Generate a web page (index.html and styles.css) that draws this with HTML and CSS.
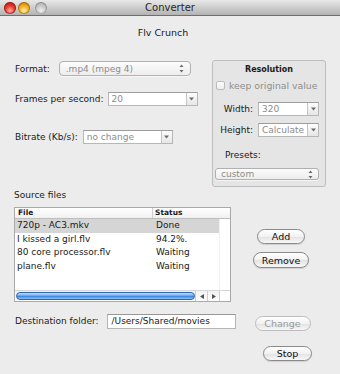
FILE: index.html
```html
<!DOCTYPE html>
<html lang="en">
<head>
  <meta charset="UTF-8">
  <meta name="viewport" content="width=device-width, initial-scale=1.0">
  <title>Converter</title>
  <link rel="stylesheet" href="styles.css">
</head>
<body>
  <div class="window">
    <div class="titlebar">
      <div class="lights">
        <span class="light light-close"></span>
        <span class="light light-min"></span>
        <span class="light light-zoom"></span>
      </div>
      <div class="window-title">Converter</div>
    </div>

    <div class="content">
      <h1 class="app-title">Flv Crunch</h1>

      <div class="settings">
        <div class="options">
          <div class="field field-format">
            <label>Format:</label>
            <div class="popup popup-format">
              <span>.mp4 (mpeg 4)</span>
              <svg class="stepper" width="5" height="9" viewBox="0 0 5 9"><path d="M2.5 0.5 L4.5 3 H0.5 Z M2.5 8.5 L4.5 6 H0.5 Z" fill="#6a6a6a"/></svg>
            </div>
          </div>

          <div class="field field-fps">
            <label>Frames per second:</label>
            <div class="combo combo-fps">
              <span class="combo-text">20</span>
              <span class="combo-btn"><svg width="5" height="4" viewBox="0 0 5 4"><path d="M0 0.5 H5 L2.5 3.5 Z" fill="#6a6a6a"/></svg></span>
            </div>
          </div>

          <div class="field field-bitrate">
            <label>Bitrate (Kb/s):</label>
            <div class="combo combo-bitrate">
              <span class="combo-text">no change</span>
              <span class="combo-btn"><svg width="5" height="4" viewBox="0 0 5 4"><path d="M0 0.5 H5 L2.5 3.5 Z" fill="#6a6a6a"/></svg></span>
            </div>
          </div>
        </div>

        <div class="resolution">
          <div class="box-title">Resolution</div>
          <div class="check-row">
            <span class="checkbox"></span>
            <span class="check-label">keep original value</span>
          </div>
          <div class="res-row res-width">
            <label>Width:</label>
            <div class="combo combo-small">
              <span class="combo-text">320</span>
              <span class="combo-btn"><svg width="5" height="4" viewBox="0 0 5 4"><path d="M0 0.5 H5 L2.5 3.5 Z" fill="#6a6a6a"/></svg></span>
            </div>
          </div>
          <div class="res-row res-height">
            <label>Height:</label>
            <div class="combo combo-small">
              <span class="combo-text">Calculate</span>
              <span class="combo-btn"><svg width="5" height="4" viewBox="0 0 5 4"><path d="M0 0.5 H5 L2.5 3.5 Z" fill="#6a6a6a"/></svg></span>
            </div>
          </div>
          <div class="presets-label">Presets:</div>
          <div class="popup popup-presets">
            <span>custom</span>
            <svg class="stepper" width="5" height="9" viewBox="0 0 5 9"><path d="M2.5 0.5 L4.5 3 H0.5 Z M2.5 8.5 L4.5 6 H0.5 Z" fill="#6a6a6a"/></svg>
          </div>
        </div>
      </div>

      <div class="section-label">Source files</div>

      <div class="files">
        <div class="file-table">
          <div class="table-head">
            <div class="col-file">File</div>
            <div class="col-status">Status</div>
          </div>
          <div class="table-body">
            <div class="table-rows">
              <div class="table-row is-selected"><span class="col-file">720p - AC3.mkv</span><span class="col-status">Done</span></div>
              <div class="table-row"><span class="col-file">I kissed a girl.flv</span><span class="col-status">94.2%.</span></div>
              <div class="table-row"><span class="col-file">80 core processor.flv</span><span class="col-status">Waiting</span></div>
              <div class="table-row"><span class="col-file">plane.flv</span><span class="col-status">Waiting</span></div>
            </div>
            <div class="vscroll"></div>
          </div>
          <div class="hscroll">
            <div class="hscroll-track"><div class="hscroll-knob"></div></div>
            <div class="hscroll-arrow"><svg width="4" height="5" viewBox="0 0 4 5"><path d="M0 2.5 L4 0 V5 Z" fill="#555"/></svg></div>
            <div class="hscroll-arrow"><svg width="4" height="5" viewBox="0 0 4 5"><path d="M4 2.5 L0 0 V5 Z" fill="#555"/></svg></div>
            <div class="hscroll-corner"></div>
          </div>
        </div>

        <div class="file-buttons">
          <button class="push-button btn-add">Add</button>
          <button class="push-button btn-remove">Remove</button>
        </div>
      </div>

      <div class="destination">
        <label>Destination folder:</label>
        <div class="text-field">/Users/Shared/movies</div>
        <button class="push-button btn-change" disabled>Change</button>
      </div>

      <div class="actions">
        <button class="push-button btn-stop">Stop</button>
      </div>
    </div>
  </div>
</body>
</html>
```

FILE: styles.css
```css
* {
  box-sizing: border-box;
}

body {
  margin: 0;
  background-color: #ececec;
  font-family: "DejaVu Sans", "Liberation Sans", sans-serif;
  font-size: 9px;
  color: #1a1a1a;
}

.window {
  width: 340px;
  height: 374px;
  overflow: hidden;
  background-color: #ececec;
}

/* Title bar */
.titlebar {
  display: grid;
  grid-template-columns: 1fr auto 1fr;
  align-items: center;
  height: 16px;
  background: linear-gradient(#e8e8e8, #b3b3b3);
  border-bottom: 1px solid #6f6f6f;
}

.lights {
  display: flex;
  align-items: center;
  padding-left: 4px;
  gap: 2px;
}

.light {
  width: 12px;
  height: 12px;
  border-radius: 50%;
}

.light-close {
  background: radial-gradient(circle at 50% 72%, #ffb0a6 0, #e6392c 45%, #a3140b 100%);
  box-shadow: inset 0 0 0 1px rgba(110, 0, 0, 0.45);
}

.light-min {
  background: radial-gradient(circle at 50% 72%, #fff0a8 0, #f2ad22 45%, #b06e00 100%);
  box-shadow: inset 0 0 0 1px rgba(120, 70, 0, 0.45);
}

.light-zoom {
  margin-left: 3px;
  background: radial-gradient(circle at 50% 72%, #eeeeee 0, #c4c4c4 50%, #9c9c9c 100%);
  box-shadow: inset 0 0 0 1px rgba(0, 0, 0, 0.2);
}

.window-title {
  font-size: 10px;
  color: #262626;
}

/* Content */
.content {
  padding: 0 28px 0 14px;
}

.app-title {
  margin: 11px 0 0;
  font-size: 9.5px;
  font-weight: normal;
  line-height: 12px;
  text-align: center;
}

.settings {
  display: flex;
  margin-top: 21px;
}

.options {
  flex: none;
  width: 198px;
  padding-left: 1px;
}

.field {
  display: flex;
  align-items: center;
  gap: 5px;
}

.field-format {
  margin-top: 1px;
  gap: 9px;
}

.field-fps {
  margin-top: 16px;
  gap: 4px;
}

.field-bitrate {
  margin-top: 24px;
}

/* Pop-up buttons */
.popup {
  display: flex;
  flex: none;
  align-items: center;
  justify-content: space-between;
  height: 15px;
  padding: 0 6px 0 6px;
  border: 1px solid #b0b0b0;
  border-radius: 4px;
  background: linear-gradient(#fcfcfc, #ededed);
  color: #8c8c8c;
  box-shadow: 0 1px 0 rgba(255, 255, 255, 0.6);
}

.popup-format {
  width: 132px;
}

.popup-presets {
  width: 104px;
  height: 12px;
  margin: 8px 0 0 2px;
  padding: 0 5px 0 5px;
  border-radius: 3px;
}

/* Combo boxes */
.combo {
  display: flex;
  flex: none;
  height: 14px;
  border: 1px solid #b7b7b7;
  border-top-color: #9d9d9d;
  background-color: #fff;
}

.combo-fps,
.combo-bitrate {
  width: 90px;
}

.combo-small {
  width: 61px;
}

.combo-text {
  flex: 1;
  padding-left: 3px;
  line-height: 12px;
  color: #8c8c8c;
  white-space: nowrap;
  overflow: hidden;
}

.combo-btn {
  display: flex;
  align-items: center;
  justify-content: center;
  width: 11px;
  border-left: 1px solid #c4c4c4;
  background: linear-gradient(#fdfdfd, #e6e6e6);
}

/* Resolution box */
.resolution {
  display: flex;
  flex: none;
  flex-direction: column;
  width: 114px;
  height: 127px;
  border: 1px solid #bdbdbd;
  border-radius: 3px;
  background-color: #e5e5e5;
}

.box-title {
  margin-top: 4px;
  font-size: 8px;
  font-weight: bold;
  line-height: 10px;
  text-align: center;
}

.check-row {
  display: flex;
  align-items: center;
  margin-top: 6px;
  padding-left: 3px;
  height: 9px;
}

.checkbox {
  flex: none;
  width: 9px;
  height: 9px;
  border: 1px solid #bcbcbc;
  border-radius: 2px;
  background: linear-gradient(#fefefe, #ececec);
}

.check-label {
  margin-left: 4px;
  font-size: 9.3px;
  color: #8e8e8e;
  white-space: nowrap;
}

.res-row {
  display: flex;
  align-items: center;
  gap: 5px;
}

.res-row label {
  width: 40px;
  text-align: right;
}

.res-width {
  margin-top: 12px;
}

.res-height {
  margin-top: 7px;
}

.presets-label {
  margin-top: 13px;
  padding-left: 12px;
  line-height: 10px;
}

/* Source files */
.section-label {
  margin-top: 2px;
  line-height: 12px;
}

.files {
  display: flex;
  margin-top: 6px;
}

.file-table {
  display: flex;
  flex: none;
  flex-direction: column;
  width: 217px;
  height: 95px;
  border: 1px solid #a9a9a9;
  background-color: #fff;
}

.table-head {
  display: flex;
  height: 11px;
  border-bottom: 1px solid #bdbdbd;
  background: linear-gradient(#ffffff, #f0f0f0);
  font-size: 7.5px;
  font-weight: bold;
  line-height: 10px;
}

.table-head .col-file {
  width: 138px;
  padding-left: 3px;
  border-right: 1px solid #cfcfcf;
}

.table-head .col-status {
  flex: 1;
  padding-left: 2px;
}

.table-body {
  display: flex;
  flex: 1;
}

.table-rows {
  flex: 1;
}

.table-row {
  display: flex;
  height: 13.5px;
  line-height: 13.5px;
}

.table-row.is-selected {
  background-color: #d5d5d5;
}

.table-row .col-file {
  width: 138px;
  padding-left: 2px;
}

.table-row .col-status {
  padding-left: 3px;
}

.vscroll {
  width: 11px;
  border-left: 1px solid #f0f0f0;
}

.hscroll {
  display: flex;
  height: 11px;
  border-top: 1px solid #d6d6d6;
  background: linear-gradient(#f2f2f2, #fdfdfd);
}

.hscroll-track {
  flex: 1;
  padding: 1px 0 1px 1px;
}

.hscroll-knob {
  width: 179px;
  height: 100%;
  border: 1px solid #2f64b0;
  border-radius: 5px;
  background: linear-gradient(#c6e0fb 0%, #76aef0 40%, #3c86e3 55%, #8fc3f7 100%);
}

.hscroll-arrow {
  display: flex;
  align-items: center;
  justify-content: center;
  width: 12px;
  border-left: 1px solid #cfcfcf;
}

.hscroll-corner {
  width: 11px;
  border-left: 1px solid #cfcfcf;
  background-color: #fff;
}

.file-buttons {
  display: flex;
  flex: none;
  flex-direction: column;
  align-items: center;
  width: 100px;
  padding-top: 22px;
  gap: 8px;
}

/* Push buttons */
.push-button {
  flex: none;
  height: 15px;
  padding: 0;
  border: 1px solid #8a8a8a;
  border-radius: 8px;
  background: linear-gradient(#ffffff 0%, #f1f1f1 50%, #e2e2e2 51%, #f7f7f7 100%);
  font-family: inherit;
  font-size: 9.5px;
  line-height: 13px;
  color: #111;
  box-shadow: 0 1px 1px rgba(0, 0, 0, 0.12);
}

.btn-add {
  width: 48px;
}

.btn-remove {
  width: 56px;
  height: 16px;
}

.btn-change {
  width: 56px;
  margin: 2px 0 0 19px;
  border-color: #bdbdbd;
  color: #9c9c9c;
  box-shadow: none;
}

.btn-stop {
  width: 49px;
}

/* Destination */
.destination {
  display: flex;
  align-items: flex-start;
  margin-top: 12px;
  padding-left: 1px;
}

.destination label {
  line-height: 15px;
  margin-right: 8px;
}

.text-field {
  flex: none;
  width: 129px;
  height: 15px;
  padding-left: 4px;
  border: 1px solid #b5b5b5;
  border-top-color: #979797;
  background-color: #fff;
  line-height: 13px;
}

.actions {
  display: flex;
  justify-content: flex-end;
  margin-top: 15px;
}
```
